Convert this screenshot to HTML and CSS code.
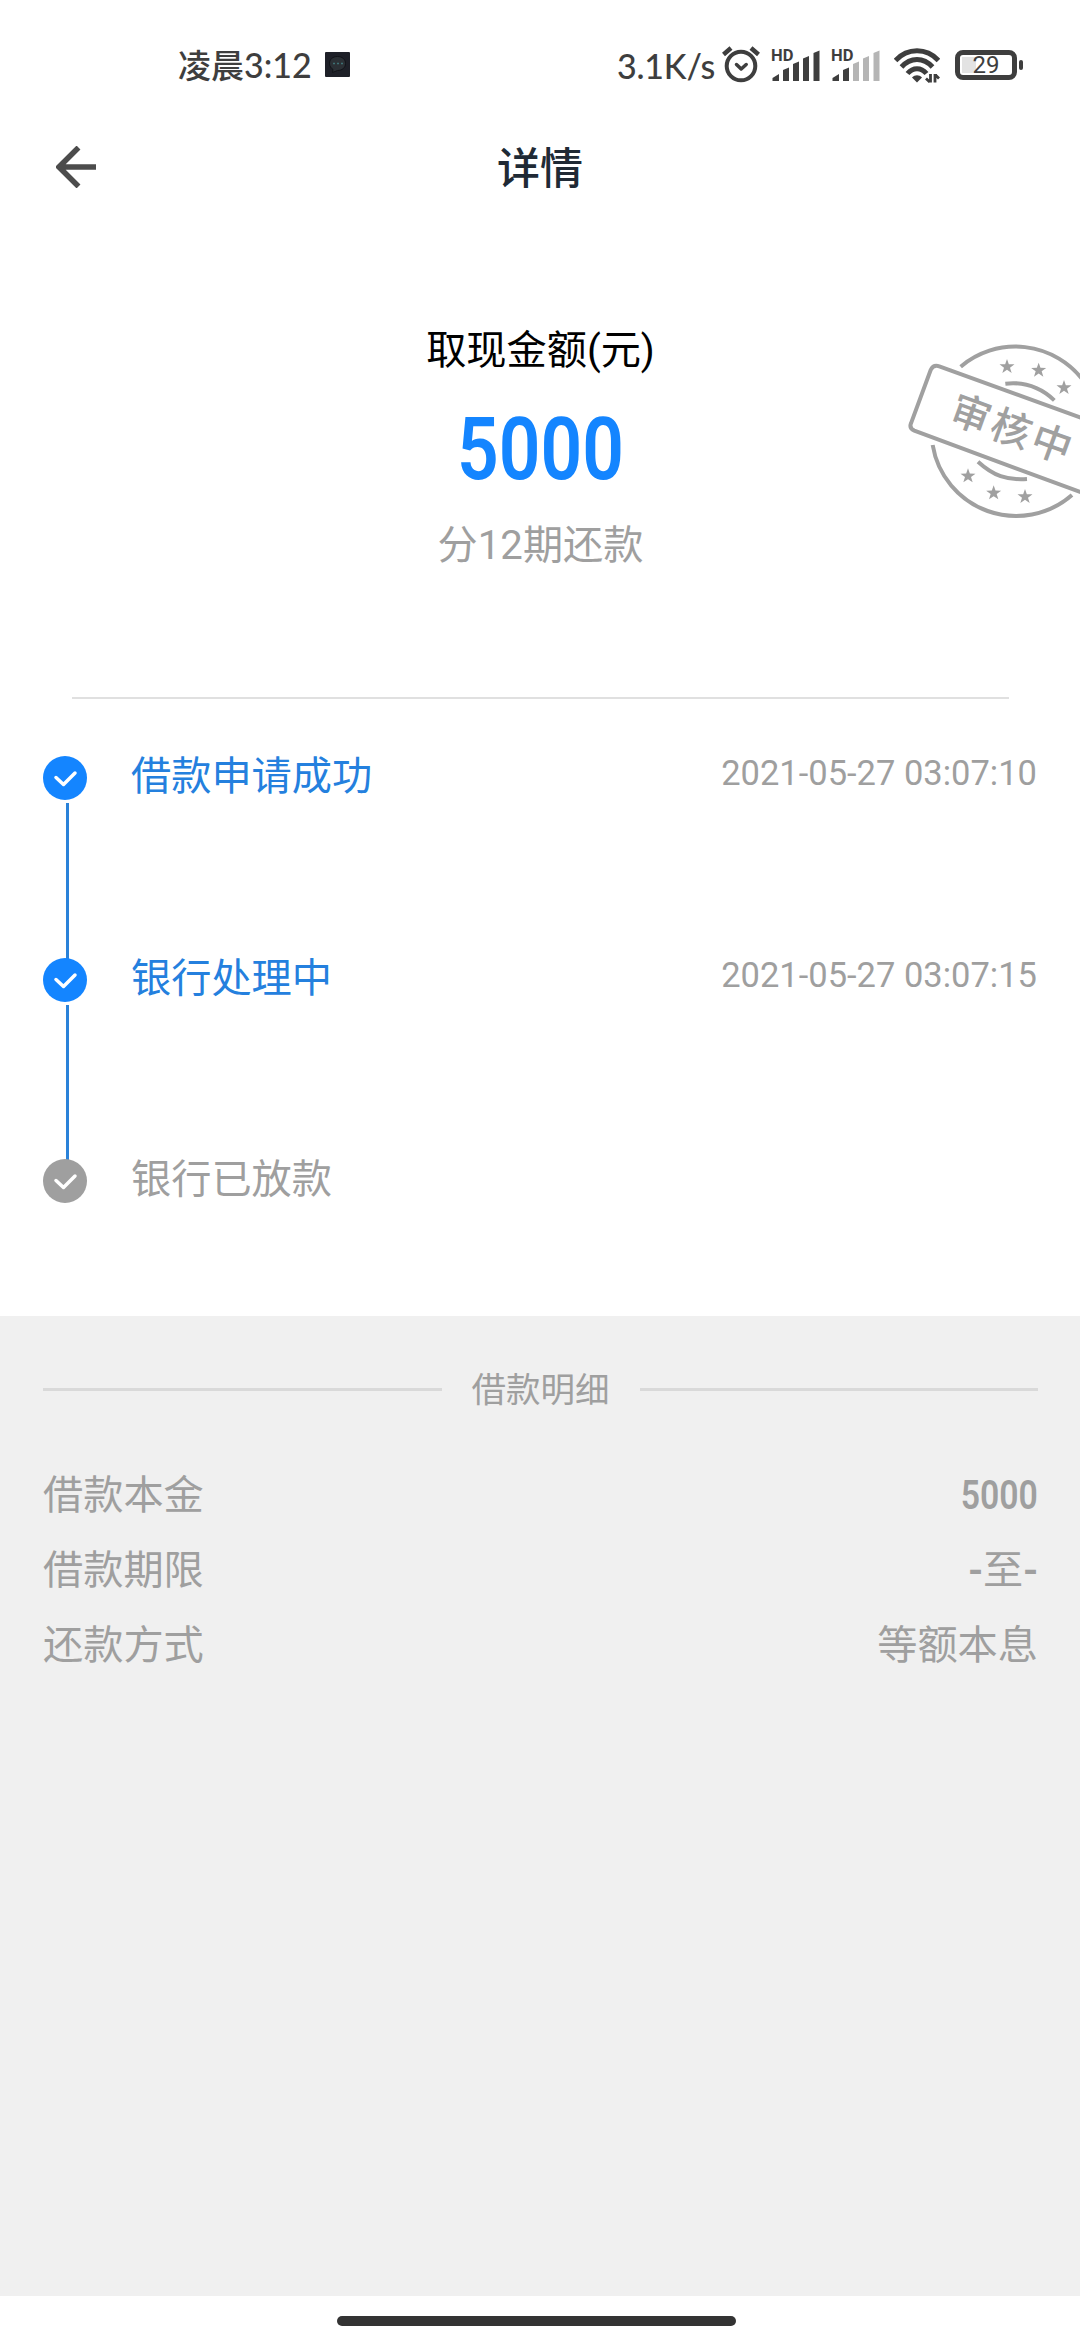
FILE: index.html
```html
<!DOCTYPE html>
<html lang="zh-CN">
<head>
  <meta charset="UTF-8">
  <meta name="viewport" content="width=device-width, initial-scale=1.0">
  <title>详情</title>
  <link rel="stylesheet" href="styles.css">
</head>
<body>
  <div class="page">
    <div class="status-bar">
      <span class="clock">凌晨<b>3:12</b></span>
      <svg class="notice" viewBox="0 0 25 25">
        <rect width="25" height="25" rx="1" fill="#1e2028"/>
        <path d="M12.500 4.500c5 0 8 3 8 7s-3 7-8 7l-5 2 .5-3c-2-1.300-3.500-3.300-3.500-6 0-4 3-7 8-7z" fill="#2b3035" stroke="#111318"/>
        <path d="M8 11.500h2M12 11.500h2M16 11.500h2" stroke="#3d7175" stroke-width="1.500"/>
      </svg>
      <span class="speed">3.1K/s</span>
      <svg class="alarm" viewBox="0 0 40 38">
        <g fill="none" stroke="#3e3e3e" stroke-linecap="round" stroke-linejoin="round">
          <circle cx="20" cy="21" r="14.300" stroke-width="4"/>
          <path d="M15.500 19.500l4.700 4.500 5-4.500" stroke-width="3.500"/>
          <path d="M2.500 9.500l7.500-6.500M30 3l7.500 6.500" stroke-width="4.500" stroke-linecap="butt"/>
        </g>
      </svg>
      <div class="signal">
        <span class="hd">HD</span>
        <svg viewBox="0 0 50 31">
          <g fill="#3e3e3e">
            <path d="M1.500 28l6.500-4v7H1.500z"/><path d="M12 20l6-2.500V31h-6z"/><path d="M22 14l6-2.500V31h-6z"/>
            <path d="M32 8.500l6-2.500v25h-6z"/><path d="M42.500 3l6-2.500V31h-6z"/>
          </g>
        </svg>
      </div>
      <div class="signal">
        <span class="hd">HD</span>
        <svg viewBox="0 0 50 31">
          <g fill="#3e3e3e"><path d="M1.500 28l6.500-4v7H1.500z"/><path d="M12 20l6-2.500V31h-6z"/></g>
          <g fill="#b5b5b5"><path d="M22 14l6-2.500V31h-6z"/><path d="M32 8.500l6-2.500v25h-6z"/><path d="M42.500 3l6-2.500V31h-6z"/></g>
        </svg>
      </div>
      <svg class="wifi" viewBox="0 0 46 35">
        <g fill="none" stroke="#3e3e3e" stroke-width="5">
          <path d="M1.500 12.500c12-13 31-13 43 0"/>
          <path d="M7.500 19c9-10 22-10 31 0"/>
          <path d="M13.500 25.500c5.500-6.500 13.500-6.500 19 0"/>
        </g>
        <path d="M18 29.500c3-3 7-3 10 0l-5 5z" fill="#3e3e3e"/>
        <path d="M36.500 26v8.500M35.800 34l-3.800-3.500M41 34.500V26M41.500 27l3.500 3.500" fill="none" stroke="#3e3e3e" stroke-width="2.800"/>
      </svg>
      <div class="battery"><span>29</span></div>
    </div>

    <div class="nav">
      <svg class="back" viewBox="0 0 40 42">
        <path d="M22.500 1.500L3 21l19.500 19.500M3 21h37" fill="none" stroke="#4c4c4c" stroke-width="5.500"/>
      </svg>
      <h1 class="title">详情</h1>
    </div>

    <div class="summary">
      <div class="summary-label">取现金额(元)</div>
      <div class="amount">5000</div>
      <div class="summary-term">分12期还款</div>
      <svg class="stamp" viewBox="0 0 570 600">
        <defs>
          <path id="star" d="M0-23l5.500 15.500 17 .5-13.500 10 5 16-14-9.500-14 9.500 5-16-13.500-10 17-.5z"/>
        </defs>
        <g fill="none" stroke="#a0a0a0" stroke-width="12">
          <path d="M212 110A254 254 0 0 1 580 152"/>
          <path d="M128 345A254 254 0 0 0 546 495"/>
          <path d="M346 161C405 154 450 170 493 211"/>
          <path d="M264 395C310 437 350 451 411 447"/>
          <path d="M600 273L148 109Q130 103 122 120L63 280Q57 295 73 302L600 497"/>
        </g>
        <g fill="#a0a0a0">
          <use href="#star" x="351" y="110"/>
          <use href="#star" x="446" y="121"/>
          <use href="#star" x="522" y="173"/>
          <use href="#star" x="234" y="438"/>
          <use href="#star" x="311" y="489"/>
          <use href="#star" x="405" y="500"/>
        </g>
        <text class="stamp-text" transform="translate(365 295) rotate(20)" x="4" y="45" text-anchor="middle">审核中</text>
      </svg>
    </div>

    <div class="steps">
      <div class="step done">
        <div class="marker">
          <svg class="check" viewBox="0 0 44 44"><circle cx="22" cy="22" r="22"/><path d="M13 21.500l7.500 7L32 17"/></svg>
          <div class="line"></div>
        </div>
        <div class="step-name">借款申请成功</div>
        <div class="step-time">2021-05-27 03:07:10</div>
      </div>
      <div class="step done">
        <div class="marker">
          <svg class="check" viewBox="0 0 44 44"><circle cx="22" cy="22" r="22"/><path d="M13 21.500l7.500 7L32 17"/></svg>
          <div class="line"></div>
        </div>
        <div class="step-name">银行处理中</div>
        <div class="step-time">2021-05-27 03:07:15</div>
      </div>
      <div class="step">
        <div class="marker">
          <svg class="check" viewBox="0 0 44 44"><circle cx="22" cy="22" r="22"/><path d="M13 21.500l7.500 7L32 17"/></svg>
        </div>
        <div class="step-name">银行已放款</div>
      </div>
    </div>

    <div class="detail">
      <div class="detail-title"><span>借款明细</span></div>
      <div class="row"><span>借款本金</span><span class="num">5000</span></div>
      <div class="row"><span>借款期限</span><span class="range"><b>-</b>至<b>-</b></span></div>
      <div class="row"><span>还款方式</span><span>等额本息</span></div>
    </div>

    <div class="home"><div class="home-bar"></div></div>
  </div>
</body>
</html>
```

FILE: styles.css
```css
* {
  box-sizing: border-box;
}
body {
  margin: 0;
  background: #fff;
  font-family: Roboto, "Noto Sans CJK SC", sans-serif;
  font-size: 40.2px;
  color: #9f9f9f;
}
.page {
  width: 1080px;
  height: 2340px;
  display: flex;
  flex-direction: column;
  overflow: hidden;
}

/* status bar */
.status-bar {
  height: 100px;
  padding: 0 57px 0 178px;
  display: flex;
  align-items: flex-start;
  color: #3e3e3e;
  font-family: Lato, "Noto Sans CJK SC", sans-serif;
  font-weight: 500;
  line-height: 40px;
}
.clock {
  width: 147px;
  margin-top: 45px;
  font-size: 33px;
  white-space: nowrap;
}
.clock b {
  font-size: 34px;
  font-weight: 500;
}
.notice {
  width: 25px;
  height: 25px;
  margin-top: 52px;
}
.speed {
  width: 100px;
  margin: 46px 4px 0 auto;
  font-size: 34px;
  letter-spacing: -0.2px;
  white-space: nowrap;
}
.alarm {
  width: 40px;
  height: 38px;
  margin-top: 45px;
  margin-right: 10px;
}
.signal {
  width: 50px;
  height: 31px;
  margin-top: 50px;
  margin-right: 10px;
  position: relative;
}
.signal svg {
  display: block;
  width: 50px;
  height: 31px;
}
.hd {
  position: absolute;
  left: 0;
  top: -1px;
  font-family: Roboto, sans-serif;
  font-size: 16.5px;
  font-weight: 700;
  line-height: 14px;
}
.wifi {
  width: 46px;
  height: 35px;
  margin-top: 48px;
  margin-left: 3px;
}
.battery {
  width: 62px;
  height: 30px;
  margin: 50px 6px 0 15px;
  border: 5px solid #3e3e3e;
  border-radius: 8px;
  position: relative;
  background: linear-gradient(#e3e3e3, #e3e3e3) 2px 2px / 14px 16px no-repeat;
  font-family: Roboto, sans-serif;
  font-size: 24px;
  font-weight: 400;
  line-height: 21px;
  text-align: center;
}
.battery::after {
  content: "";
  position: absolute;
  right: -11px;
  top: 5px;
  width: 4px;
  height: 10px;
  border-radius: 2px;
  background: #3e3e3e;
}

.nav {
  height: 138px;
  padding: 0 56px;
  display: grid;
  grid-template-columns: 40px 1fr 40px;
}
.back {
  width: 40px;
  height: 42px;
  margin-top: 46px;
}
.title {
  margin: 0;
  font-size: 43px;
  font-weight: 500;
  line-height: 138px;
  text-align: center;
  color: #202a35;
}

/* amount */
.summary {
  height: 461px;
  margin: 0 71px 0 72px;
  padding-top: 88px;
  border-bottom: 2px solid #e0e0e0;
  position: relative;
  text-align: center;
  line-height: 50px;
}
.summary-label {
  color: #000;
}
.amount {
  margin: 28px 0 27px;
  font-size: 88px;
  font-weight: 600;
  line-height: 90px;
  color: #1485ff;
  transform: scaleX(0.83);
}
.stamp {
  position: absolute;
  top: 92px;
  right: -71px;
  width: 190px;
  height: 200px;
}
.stamp-text {
  font-size: 120px;
  font-weight: 500;
  letter-spacing: 9px;
  fill: #a0a0a0;
}

/* progress */
.steps {
  height: 617px;
  padding: 57px 43px 0;
}
.step {
  height: 201.5px;
  display: flex;
}
.marker {
  width: 88px;
  display: flex;
  flex-direction: column;
}
.check {
  display: block;
  width: 44px;
  height: 44px;
}
.check circle {
  fill: #9f9f9f;
}
.check path {
  fill: none;
  stroke: #fff;
  stroke-width: 3.5;
  stroke-linecap: round;
  stroke-linejoin: round;
}
.line {
  flex: 1;
  width: 3px;
  margin: 3px 0 -1px 23px;
  background: #2a82d9;
}
.step-name {
  flex: 1;
  line-height: 41px;
}
.step-time {
  font-size: 34.5px;
  line-height: 34px;
}
.done .check circle {
  fill: #1485ff;
}
.done .step-name {
  color: #2480de;
}

/* loan detail */
.detail {
  height: 980px;
  padding: 48px 42px 0 43px;
  background: #f0f0f0;
}
.detail-title {
  display: flex;
  align-items: center;
  gap: 30px;
  height: 50px;
  margin-bottom: 44px;
  font-size: 34.5px;
}
.detail-title span {
  padding-bottom: 5px;
}
.detail-title::before,
.detail-title::after {
  content: "";
  flex: 1;
  height: 3px;
  background: #d9d9d9;
}
.row {
  display: flex;
  justify-content: space-between;
  line-height: 75px;
}
.num {
  font-weight: 600;
  transform: scaleX(0.84);
  transform-origin: right;
}
.range b {
  font-weight: 600;
}

.home {
  height: 44px;
  padding-top: 20px;
}
.home-bar {
  width: 399px;
  height: 10px;
  margin: 0 auto 0 337px;
  border-radius: 5px;
  background: #333;
}
```
